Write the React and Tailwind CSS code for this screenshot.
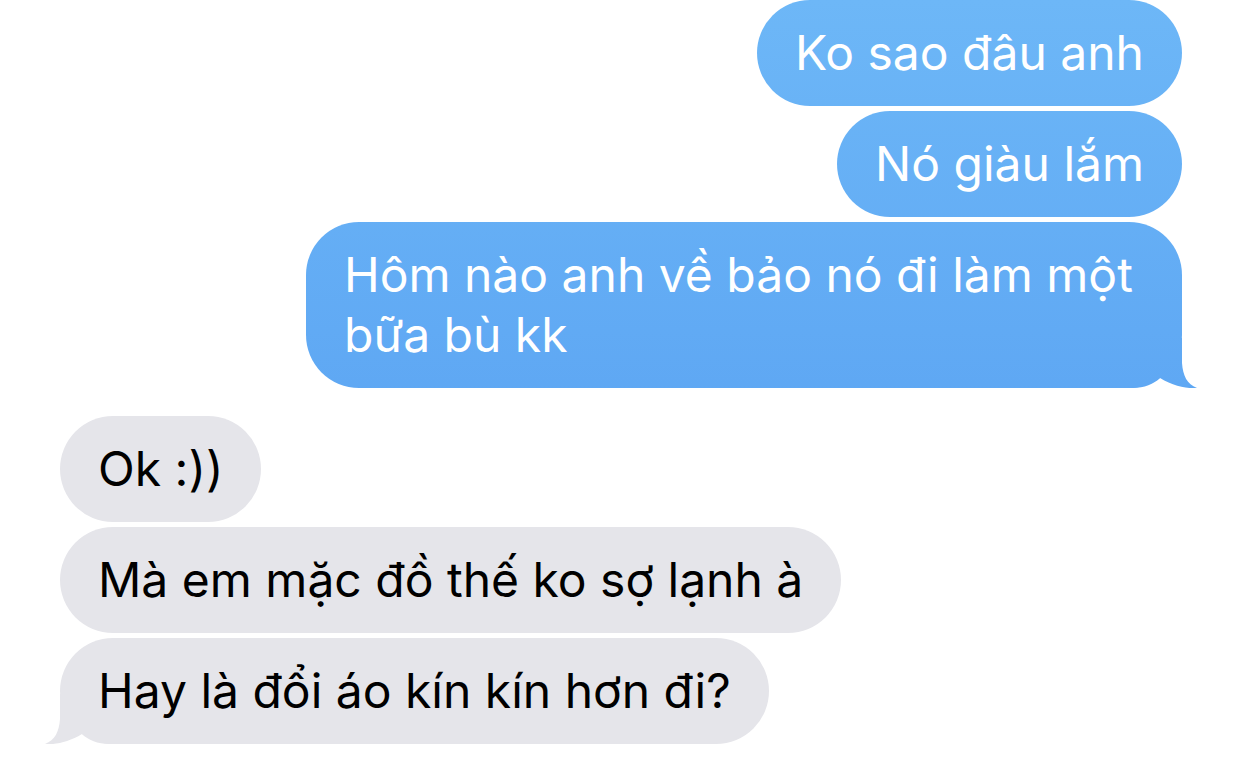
import React from "react";

const sent = ["Ko sao đâu anh", "Nó giàu lắm", "Hôm nào anh về bảo nó đi làm một bữa bù kk"];
const received = ["Ok :))", "Mà em mặc đồ thế ko sợ lạnh à", "Hay là đổi áo kín kín hơn đi?"];

// tail shares the page-wide gradient, so it blends into the bubble
const SentTail = () => (
  <div className="absolute right-[-15px] bottom-0 w-[70px] h-[50px] bg-fixed bg-[linear-gradient(#6db7f7,#5199f0)] [clip-path:path('M0_0_L55_0_L55_25_C56_38_60_46_70_50_C60_51_46_48_33_40_C27_46_17_50_6_50_L0_50_Z')]" />
);

const ReceivedTail = () => (
  <svg className="absolute left-[-15px] bottom-0" width="70" height="50" viewBox="0 0 70 50">
    <path d="M70 0 L15 0 L15 25 C14 38 10 46 0 50 C10 51 24 48 37 40 C43 46 53 50 64 50 L70 50 Z" fill="#e5e5ea" />
  </svg>
);

const Bubble = ({ text, mine, tail }) => (
  <div
    className={`relative max-w-[876px] rounded-[53px] px-[38px] py-[23px] text-[48px] leading-[60px] ${
      mine ? "bg-fixed bg-[linear-gradient(#6db7f7,#5199f0)] text-white" : "bg-[#e5e5ea] text-black"
    }`}
  >
    {tail && (mine ? <SentTail /> : <ReceivedTail />)}
    <span className="relative">{text}</span>
  </div>
);

export default function App() {
  return (
    <div
      className="w-[1242px] h-[767px] overflow-hidden bg-white flex flex-col"
      style={{ fontFamily: "Inter, 'Noto Sans', sans-serif" }}
    >
      <div className="flex flex-col items-end gap-[5px] pr-[60px]">
        {sent.map((t, i) => (
          <Bubble key={t} text={t} mine tail={i === sent.length - 1} />
        ))}
      </div>
      <div className="flex flex-col items-start gap-[5px] pl-[60px] mt-[28px]">
        {received.map((t, i) => (
          <Bubble key={t} text={t} tail={i === received.length - 1} />
        ))}
      </div>
    </div>
  );
}
